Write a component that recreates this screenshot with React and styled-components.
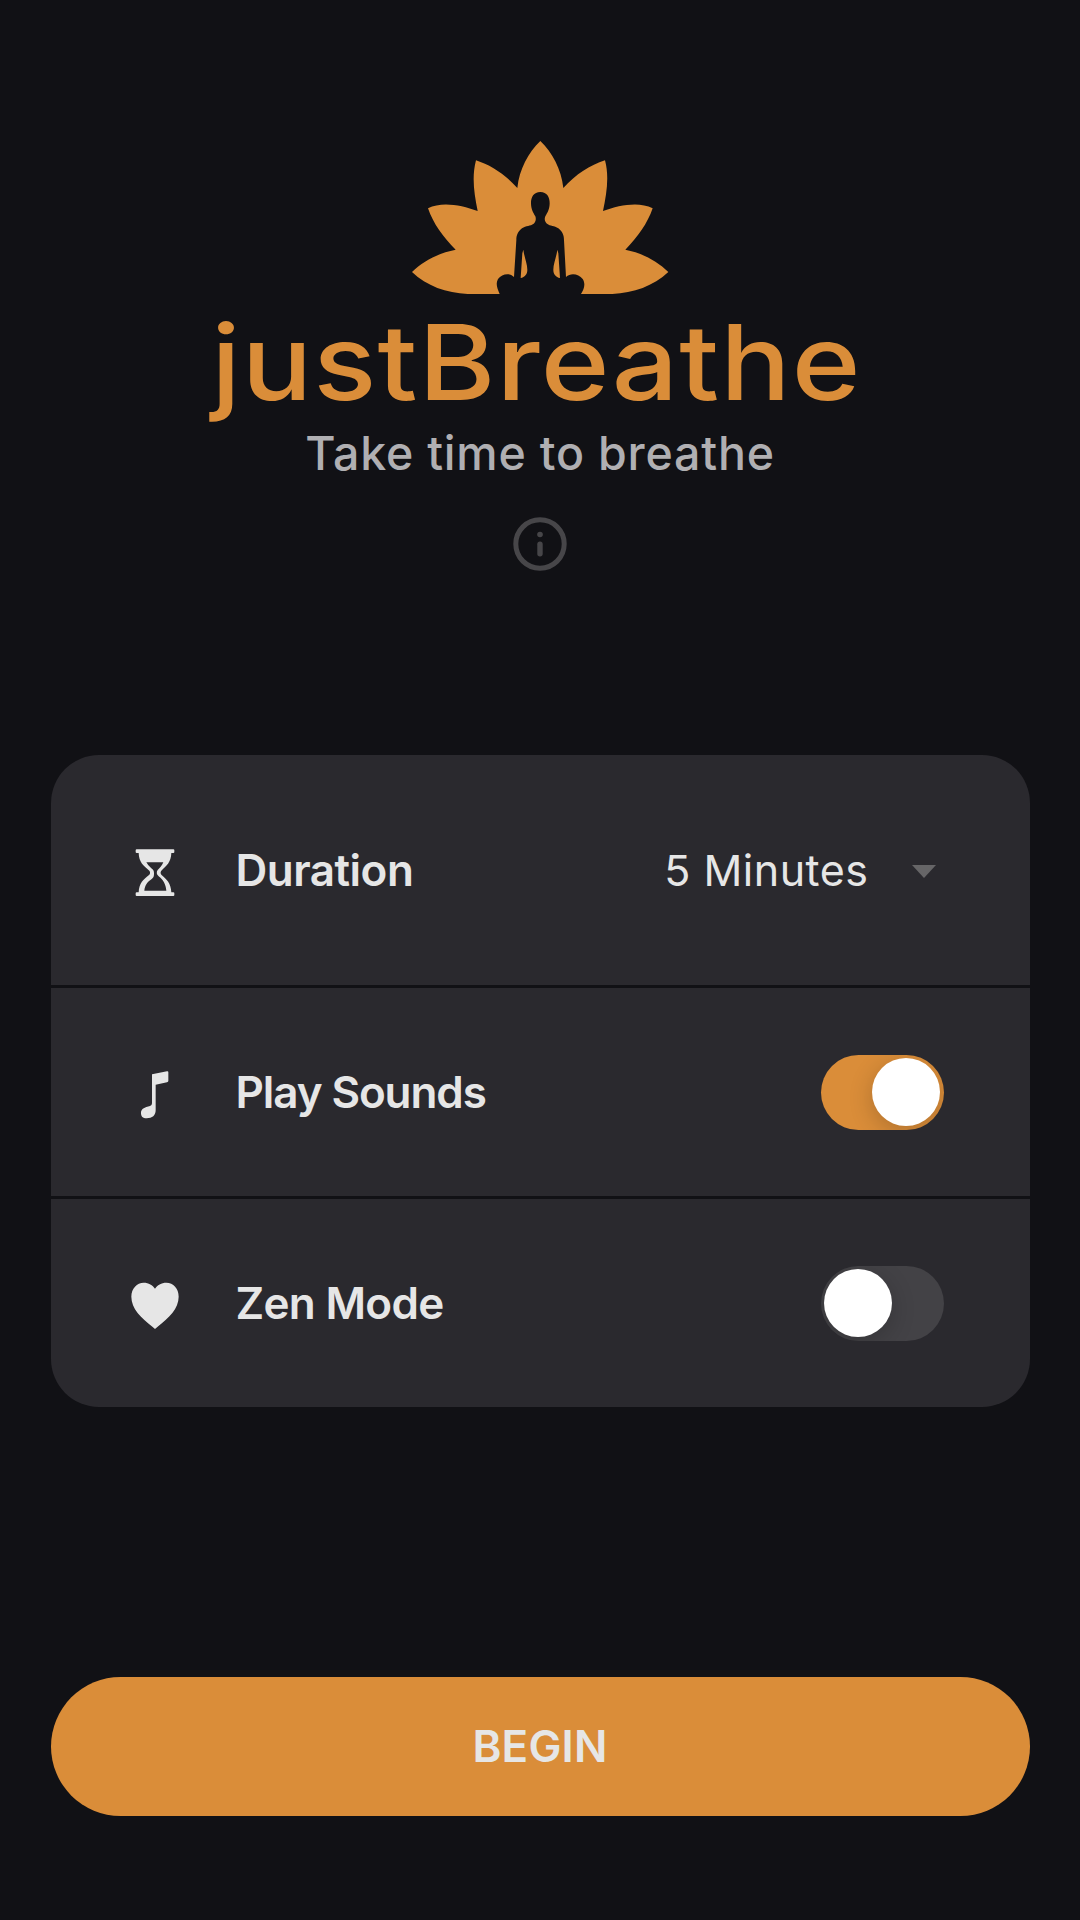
import React, { useState } from "react";
import styled, { createGlobalStyle } from "styled-components";

const GlobalStyle = createGlobalStyle`
  * {
    box-sizing: border-box;
  }

  body {
    margin: 0;
    background-color: #111115;
    font-family: Inter, "Open Sans", sans-serif;
  }
`;

const Screen = styled.main`
  height: 1920px;
  padding: 140px 50.5px 0;
  display: flex;
  flex-direction: column;
  background-color: #111115;
  overflow: hidden;
`;

const Header = styled.header`
  height: 615px;
  display: flex;
  flex-direction: column;
  align-items: center;
`;

const Lotus = styled.svg`
  width: 260px;
  height: 156px;
  flex: none;
`;

const Title = styled.h1`
  margin: 7px 0 0 -7px;
  height: 118px;
  line-height: 118px;
  font-size: 104.5px;
  font-weight: 450;
  letter-spacing: 1px;
  white-space: nowrap;
  color: #da8d39;
  transform: scaleX(1.12);
`;

const Subtitle = styled.p`
  margin: 8px 0 0;
  height: 48px;
  line-height: 48px;
  font-size: 46.5px;
  font-weight: 500;
  letter-spacing: 0.8px;
  white-space: nowrap;
  color: #b0afb2;
`;

const InfoButton = styled.button`
  margin-top: 40px;
  padding: 0;
  width: 54px;
  height: 54px;
  border: 0;
  background: none;
  color: #474649;
  cursor: pointer;

  svg {
    display: block;
  }
`;

const Card = styled.section`
  flex: none;
  border-radius: 48px;
  background-color: #2a292e;
  overflow: hidden;
`;

const Row = styled.div`
  height: ${(props) => props.$height}px;
  padding: 0 86px 0 79px;
  display: flex;
  align-items: center;

  & + & {
    border-top: 3px solid #111115;
  }
`;

const RowIcon = styled.svg`
  width: 50px;
  height: 50px;
  margin: 4px 56px 0 0;
  flex: none;
  fill: #e6e6e6;
`;

const Label = styled.span`
  flex: 1;
  font-size: 44px;
  font-weight: 600;
  letter-spacing: ${(props) => props.$spacing}px;
  color: #e6e6e6;
`;

const Select = styled.button`
  display: flex;
  align-items: center;
  gap: 43px;
  padding: 0 8px 0 0;
  border: 0;
  background: none;
  font-family: inherit;
  font-size: 43px;
  font-weight: 400;
  letter-spacing: 0.5px;
  color: #e6e6e6;
  cursor: pointer;
`;

const Caret = styled.svg`
  width: 24px;
  height: 13px;
  margin-top: 2px;
  fill: #666567;
`;

const Track = styled.button`
  width: 123px;
  height: 75px;
  padding: 3.5px;
  display: flex;
  justify-content: ${(props) => (props.$on ? "flex-end" : "flex-start")};
  border: 0;
  border-radius: 38px;
  background-color: ${(props) => (props.$on ? "#da8d39" : "#434246")};
  overflow: hidden;
  cursor: pointer;
`;

const Knob = styled.span`
  width: 68px;
  height: 68px;
  border-radius: 50%;
  background-color: #fff;
  box-shadow: 0 6px 24px rgba(0, 0, 0, 0.2);
`;

const Begin = styled.button`
  margin-top: 270px;
  height: 139px;
  flex: none;
  border: 0;
  border-radius: 70px;
  background-color: #da8d39;
  color: #e6e6e6;
  font-family: inherit;
  font-size: 44px;
  font-weight: 600;
  line-height: 1;
  padding-bottom: 3px;
  letter-spacing: 0.2px;
  text-transform: uppercase;
  cursor: pointer;
`;

const Logo = () => (
  <Lotus viewBox="0 0 780 468">
    <path
      fill="#da8d39"
      d="M391 3C427 37 454 88 460 144C498 102 540 76 585 61C598 110 590 159 579 213C629 195 687 184 728 205C712 251 684 290 646 329C697 339 741 363 775 396C730 438 671 459 607 462H173C109 459 50 438 6 396C40 363 86 339 137 329C98 290 70 251 54 205C95 184 153 195 203 213C192 159 185 110 198 61C243 76 284 102 322 144C328 88 355 37 391 3Z"
    />
    <path
      fill="#111115"
      d="M391 156C411 156 419 171 419 190C419 207 412 219 406 229C402 238 405 246 411 251C421 259 433 256 445 265C457 274 462 285 462 301L468 411C482 397 506 401 518 417C527 431 523 446 513 462H269C262 446 256 431 264 417C276 401 299 397 312 411L319 301C319 285 324 274 336 265C348 256 361 259 371 251C377 246 379 238 376 229C370 219 363 207 363 190C363 171 371 156 391 156Z"
    />
    <path
      fill="#da8d39"
      d="M340 329C343 353 352 371 352 389C352 403 344 411 332 414L337 340ZM442 329C439 353 430 371 430 389C430 403 438 411 450 414L445 340Z"
    />
  </Lotus>
);

const InfoIcon = () => (
  <svg viewBox="0 0 54 54" width="54" height="54">
    <circle
      cx="27"
      cy="27"
      r="24.2"
      fill="none"
      stroke="currentColor"
      strokeWidth="5"
    />
    <circle cx="27" cy="17.5" r="2.8" fill="currentColor" />
    <rect x="24.3" y="24.5" width="5.4" height="15" rx="2.7" fill="currentColor" />
  </svg>
);

const Hourglass = () => (
  <RowIcon viewBox="0 0 150 150">
    <path
      fillRule="evenodd"
      d="M20 7H130Q133 7 133 10V15Q133 18 130 18H124C123 46 110 56 94 71C91 75 91 79 94 83C110 97 123 108 124 136H130Q133 136 133 139V144Q133 147 130 147H20Q17 147 17 144V139Q17 136 20 136H26C27 108 40 97 58 83C61 79 61 75 58 71C40 56 27 46 26 18H20Q17 18 17 15V10Q17 7 20 7ZM49 46H100C96 56 90 62 83 69C79 74 79 83 86 88C99 98 108 112 109 131H43C44 114 53 104 66 95C72 91 72 86 72 78C72 69 68 68 61 61Q54 55 49 46Z"
    />
  </RowIcon>
);

const Note = () => (
  <RowIcon viewBox="0 0 150 150">
    <path d="M66 16L111 7Q115 6 115 10V36Q115 39 111 40L77 47V124C77 139 67 148 50 148C38 148 33 142 33 132C33 122 40 117 49 114L60 111Q66 109 66 103Z" />
  </RowIcon>
);

const Heart = () => (
  <RowIcon viewBox="0 0 150 150">
    <path d="M75 147L68 141C33 113 4 86 4 50C4 25 21 8 41 8C56 8 68 15 75 26C82 15 94 8 109 8C130 8 146 25 146 50C146 86 117 113 82 141Z" />
  </RowIcon>
);

const Toggle = ({ on, onChange, label }) => (
  <Track
    $on={on}
    role="switch"
    aria-checked={on}
    aria-label={label}
    onClick={() => onChange(!on)}
  >
    <Knob />
  </Track>
);

const App = () => {
  const [sounds, setSounds] = useState(true);
  const [zen, setZen] = useState(false);

  return (
    <Screen>
      <GlobalStyle />
      <Header>
        <Logo />
        <Title>justBreathe</Title>
        <Subtitle>Take time to breathe</Subtitle>
        <InfoButton aria-label="info">
          <InfoIcon />
        </InfoButton>
      </Header>
      <Card>
        <Row $height={230}>
          <Hourglass />
          <Label $spacing={-0.5}>Duration</Label>
          <Select>
            5 Minutes
            <Caret viewBox="0 0 24 13">
              <path d="M0 0H24L12 13Z" />
            </Caret>
          </Select>
        </Row>
        <Row $height={211}>
          <Note />
          <Label $spacing={-1.1}>Play Sounds</Label>
          <Toggle on={sounds} onChange={setSounds} label="Play Sounds" />
        </Row>
        <Row $height={211}>
          <Heart />
          <Label $spacing={-0.7}>Zen Mode</Label>
          <Toggle on={zen} onChange={setZen} label="Zen Mode" />
        </Row>
      </Card>
      <Begin>Begin</Begin>
    </Screen>
  );
};

export default App;
